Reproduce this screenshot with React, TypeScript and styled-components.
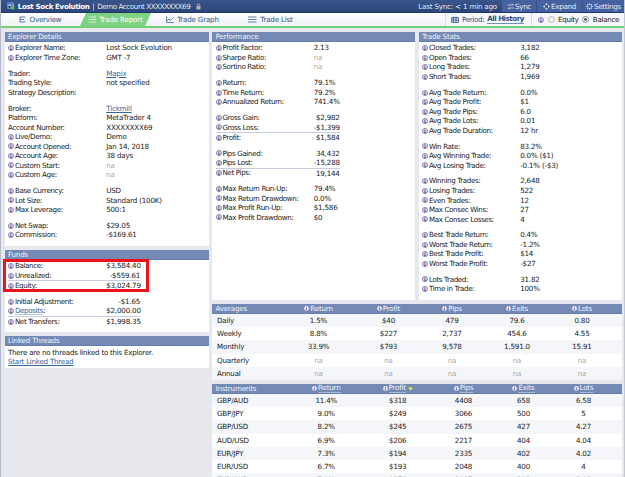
import type { ReactNode } from "react";
import styled, { createGlobalStyle } from "styled-components";

const GlobalStyle = createGlobalStyle`
  *,
  *::after {
    box-sizing: border-box;
  }

  body {
    margin: 0;
    overflow: hidden;
    font-family: "DejaVu Sans", Verdana, sans-serif;
    font-size: 7.15px;
    letter-spacing: -0.2px;
    color: #222;
    background: #e6e8ed;
  }
`;

const Page = styled.div`
  width: 625px;
  height: 477px;
  overflow: hidden;
  border-left: 1.5px solid #b3bac9;
  border-right: 1.5px solid #c3c8d2;
`;

const TitleBar = styled.header`
  display: flex;
  align-items: center;
  height: 13px;
  padding-left: 6px;
  color: #e4eaf6;
  background: linear-gradient(#39568c, #2b4578);
  border-bottom: 1px solid #20386b;
  white-space: nowrap;
`;

const Title = styled.div`
  display: flex;
  align-items: center;
  flex: 1;
  gap: 2.8px;
  letter-spacing: -0.42px;

  b {
    color: #fff;
    letter-spacing: -0.38px;
  }
`;

const LastSync = styled.span`
  margin-right: 4px;
`;

const TopButton = styled.div<{ $width: number }>`
  display: flex;
  align-items: center;
  justify-content: center;
  gap: 1px;
  width: ${(p) => p.$width}px;
  height: 12px;
  letter-spacing: -0.3px;
  background: #4661a0;
  border-left: 1px solid #36518b;
`;

const TabBar = styled.nav`
  display: flex;
  height: 15px;
  color: #2b5288;
  background: linear-gradient(#fff, #eff1f7);
  border-bottom: 2px solid #74d074;
  white-space: nowrap;
`;

const Tab = styled.div<{ $width: number; $active?: boolean }>`
  display: flex;
  align-items: center;
  justify-content: center;
  gap: 3px;
  width: ${(p) => p.$width}px;
  color: ${(p) => (p.$active ? "#fff" : "inherit")};
  background: ${(p) => (p.$active ? "#7fd284" : "none")};
  clip-path: ${(p) =>
    p.$active ? "polygon(6px 0, 100% 0, calc(100% - 6px) 100%, 0 100%)" : "none"};
`;

const Period = styled.div`
  display: flex;
  align-items: center;
  gap: 3px;
  width: 87px;
  margin-left: auto;
  padding-left: 5px;
  letter-spacing: -0.35px;
  background: #f5f7fc;
  border-left: 1px solid #d8dce6;
  border-right: 1px solid #d8dce6;

  b {
    line-height: 8px;
    letter-spacing: -0.5px;
    border-bottom: 1px solid #6e91c2;
  }
`;

const Options = styled.div`
  display: flex;
  align-items: center;
  width: 92px;
  padding-left: 6px;
  gap: 3.5px;
  letter-spacing: -0.3px;
  color: #222;
  background: #f5f7fc;
`;

const Radio = styled.i<{ $on?: boolean }>`
  width: 7px;
  height: 7px;
  border: 1px solid ${(p) => (p.$on ? "#8c8c8c" : "#b5b5b5")};
  border-radius: 50%;
  background: ${(p) => (p.$on ? "radial-gradient(#555 30%, #fff 48%)" : "#f2f2f2")};
`;

const Content = styled.main`
  display: grid;
  grid-template-columns: 204px 409.5px;
  gap: 3.5px;
  padding: 4px 0 0 3.5px;
`;

const Column = styled.div`
  display: flex;
  flex-direction: column;
  gap: 4px;
`;

const TopPanels = styled.div`
  display: grid;
  grid-template-columns: 203px 203px;
  gap: 3.5px;
`;

const Panel = styled.section<{ $height: number }>`
  height: ${(p) => p.$height}px;
  background: #fff;
`;

const PanelHeader = styled.h3`
  height: 10px;
  margin: 0;
  padding-left: 3.5px;
  font-size: inherit;
  font-weight: normal;
  line-height: 9.5px;
  color: #eef2fa;
  background: #748ab5;
  border-bottom: 1px solid #647dad;
`;

const Rows = styled.div`
  display: flex;
  flex-direction: column;
  gap: 6.3px;
  padding: 1.4px 3.5px 0;
`;

const Row = styled.div<{ $total?: boolean }>`
  display: flex;
  height: ${(p) => (p.$total ? 10.2 : 9.53)}px;
  line-height: 9.53px;
  white-space: nowrap;
  width: ${(p) => (p.$total ? "fit-content" : "auto")};
  border-top: ${(p) => (p.$total ? "1px solid #c6cfe1" : "none")};
`;

const Label = styled.span`
  display: flex;
  align-items: center;
  gap: 0.9px;
  width: 98.2px;
  letter-spacing: -0.36px;
`;

const Value = styled.span<{ $right?: number; $muted?: boolean }>`
  width: ${(p) => (p.$right ? `${p.$right}px` : "auto")};
  text-align: ${(p) => (p.$right ? "right" : "left")};
  color: ${(p) => (p.$muted ? "#aaa" : "inherit")};
`;

const Link = styled.a`
  color: #3668a0;
  text-decoration: underline;
  text-decoration-thickness: 1px;
  text-underline-offset: 1px;
`;

const SoftLink = styled(Link)`
  text-decoration-color: #b9c9de;
`;

const Highlighted = styled.div`
  position: relative;

  &::after {
    content: "";
    position: absolute;
    top: -2.5px;
    left: -5.5px;
    width: 146px;
    height: 33px;
    border: 3px solid #ec111a;
  }
`;

const Note = styled.div`
  padding: 1.7px 3.5px;
  line-height: 9.2px;
  letter-spacing: -0.26px;
`;

const Table = styled.section`
  background: #fff;
`;

const TableRow = styled.div<{ $columns: string; $head?: boolean }>`
  display: grid;
  grid-template-columns: ${(p) => p.$columns};
  height: ${(p) => (p.$head ? 10 : 13.2)}px;
  line-height: ${(p) => (p.$head ? 9.5 : 13)}px;
  color: ${(p) => (p.$head ? "#eef2fa" : "inherit")};
  background: ${(p) => (p.$head ? "#748ab5" : "#fff")};
  border-bottom: ${(p) => (p.$head ? "1px solid #647dad" : "none")};

  &:nth-child(even) {
    background: #f4f6fa;
  }
`;

const Name = styled.span<{ $head?: boolean }>`
  padding-left: ${(p) => (p.$head ? 3.5 : 5)}px;
`;

const Cell = styled.span<{ $muted?: boolean }>`
  text-align: center;
  color: ${(p) => (p.$muted ? "#aaa" : "inherit")};
`;

const HeadCell = styled.span<{ $sortable?: boolean }>`
  display: flex;
  align-items: center;
  justify-content: center;
  gap: 1px;

  u {
    text-decoration: none;
    line-height: 8.5px;
    border-bottom: ${(p) => (p.$sortable ? "1px solid #a9b9d8" : "none")};
  }
`;

const Info = ({ light }: { light?: boolean }) => (
  <svg width={light ? 5 : 6} height={light ? 5 : 6} viewBox="0 0 12 12">
    <circle
      cx="6"
      cy="6"
      r="5.2"
      fill={light ? "#f1ecf8" : "#d9d3ea"}
      stroke={light ? "#e4e2f2" : "#8379ab"}
      strokeWidth="1.6"
    />
    <path
      d="M6 2.6v1.6M4.5 5.4H6v3.8M4.3 9.2h3.6"
      stroke="#5d4b91"
      strokeWidth="1.6"
      fill="none"
    />
  </svg>
);

const Logo = () => (
  <svg width="8" height="8" viewBox="0 0 16 16">
    <path d="M1 1h13v13H1z" fill="#9eb4dc" />
    <path d="M1 1h13v4H1z" fill="#4a79d0" />
    <path d="M3 8h4v5H3z" fill="#26395e" />
    <path d="M8 6h3v4H8z" fill="#e34040" />
    <path d="M10 9h5v6h-5z" fill="#4fb755" />
  </svg>
);

const Lock = () => (
  <svg width="9" height="7" viewBox="-6 0 18 14">
    <path d="M2.5 7V4a2.5 2.5 0 0 1 5 0v3" fill="none" stroke="#aaa" strokeWidth="1.8" />
    <path d="M1 6h8v7H1z" fill="#b6b1a8" />
  </svg>
);

const icons = {
  overview: "M2 2h11M2 7h8M2 12h11M2 2v10",
  report: "M1 2h2M5 2h11M1 7h2M5 7h11M1 12h2M5 12h11",
  graph: "M1 1v12h15M2 10l4-4 3 3 6-6",
  list: "M0 2h17M0 7h17M0 12h17",
  calendar: "M1 3h14v10H1zM1 6h14M1 9.5h14M5 1v12M10 1v12",
  sync: "M1 4h12M10 1l3 3M14 10H2M5 13l-3-3",
  expand: "M7 1v3M7 10v3M4.5 3.5L7 1l2.5 2.5M4.5 10.5L7 13l2.5-2.5M3.5 4.5L1 7l2.5 2.5M10.5 4.5L13 7l-2.5 2.5M1 7h3M10 7h3",
  settings: "M7 3a4 4 0 1 0 .1 0zM7 0v3M7 11v3M0 7h3M11 7h3M2 2l2 2M10 10l2 2M12 2l-2 2M4 10l-2 2",
};

const Icon = ({ name, width = 8 }: { name: keyof typeof icons; width?: number }) => (
  <svg width={width} height="7" viewBox={`0 0 ${width * 2} 14`}>
    <path d={icons[name]} fill="none" stroke="currentColor" strokeWidth="1.8" opacity="0.8" />
  </svg>
);

interface Item {
  label: ReactNode;
  value?: ReactNode;
  plain?: boolean;
  right?: number;
  total?: boolean;
}

const item = (label: ReactNode, value?: ReactNode): Item => ({ label, value });
const plain = (label: string, value?: ReactNode): Item => ({ label, value, plain: true });

const explorer: Item[][] = [
  [item("Explorer Name:", "Lost Sock Evolution"), item("Explorer Time Zone:", "GMT -7")],
  [
    plain("Trader:", <Link>Mapix</Link>),
    plain("Trading Style:", "not specified"),
    plain("Strategy Description:"),
  ],
  [
    plain("Broker:", <Link>Tickmill</Link>),
    plain("Platform:", "MetaTrader 4"),
    plain("Account Number:", "XXXXXXXX69"),
    item("Live/Demo:", "Demo"),
    item("Account Opened:", "Jan 14, 2018"),
    item("Account Age:", "38 days"),
    item("Custom Start:", "na"),
    item("Custom Age:", "na"),
  ],
  [
    item("Base Currency:", "USD"),
    item("Lot Size:", "Standard (100K)"),
    item("Max Leverage:", "500:1"),
  ],
  [item("Net Swap:", "$29.05"), item("Commission:", "-$169.61")],
];

const balance: Item[] = [
  { label: "Balance:", value: "$3,584.40", right: 34 },
  { label: "Unrealized:", value: "-$559.61", right: 34 },
  { label: "Equity:", value: "$3,024.79", right: 34, total: true },
];

const transfers: Item[] = [
  { label: "Initial Adjustment:", value: "-$1.65", right: 34 },
  { label: <span><SoftLink>Deposits</SoftLink>:</span>, value: "$2,000.00", right: 34 },
  { label: "Net Transfers:", value: "$1,998.35", right: 34, total: true },
];

const performance: Item[][] = [
  [item("Profit Factor:", "2.13"), item("Sharpe Ratio:", "na"), item("Sortino Ratio:", "na")],
  [
    item("Return:", "79.1%"),
    item("Time Return:", "79.2%"),
    item("Annualized Return:", "741.4%"),
  ],
  [
    { label: "Gross Gain:", value: "$2,982", right: 26 },
    { label: "Gross Loss:", value: "-$1,399", right: 26 },
    { label: "Profit:", value: "$1,584", right: 26, total: true },
  ],
  [
    { label: "Pips Gained:", value: "34,432", right: 26 },
    { label: "Pips Lost:", value: "-15,288", right: 26 },
    { label: "Net Pips:", value: "19,144", right: 26, total: true },
  ],
  [
    item("Max Return Run-Up:", "79.4%"),
    item("Max Return Drawdown:", "0.0%"),
    item("Max Profit Run-Up:", "$1,586"),
    item("Max Profit Drawdown:", "$0"),
  ],
];

const stats: Item[][] = [
  [
    item("Closed Trades:", "3,182"),
    item("Open Trades:", "66"),
    item("Long Trades:", "1,279"),
    item("Short Trades:", "1,969"),
  ],
  [
    item("Avg Trade Return:", "0.0%"),
    item("Avg Trade Profit:", "$1"),
    item("Avg Trade Pips:", "6.0"),
    item("Avg Trade Lots:", "0.01"),
    item("Avg Trade Duration:", "12 hr"),
  ],
  [
    item("Win Rate:", "83.2%"),
    item("Avg Winning Trade:", "0.0% ($1)"),
    item("Avg Losing Trade:", "-0.1% (-$3)"),
  ],
  [
    item("Winning Trades:", "2,648"),
    item("Losing Trades:", "522"),
    item("Even Trades:", "12"),
    item("Max Consec Wins:", "27"),
    item("Max Consec Losses:", "4"),
  ],
  [
    item("Best Trade Return:", "0.4%"),
    item("Worst Trade Return:", "-1.2%"),
    item("Best Trade Profit:", "$14"),
    item("Worst Trade Profit:", "-$27"),
  ],
  [item("Lots Traded:", "31.82"), item("Time in Trade:", "100%")],
];

const columns = ["Return", "Profit", "Pips", "Exits", "Lots"];

const averages = [
  ["Daily", "1.5%", "$40", "479", "79.6", "0.80"],
  ["Weekly", "8.8%", "$227", "2,737", "454.6", "4.55"],
  ["Monthly", "33.9%", "$793", "9,578", "1,591.0", "15.91"],
  ["Quarterly", "na", "na", "na", "na", "na"],
  ["Annual", "na", "na", "na", "na", "na"],
];

const instruments = [
  ["GBP/AUD", "11.4%", "$318", "4408", "658", "6.58"],
  ["GBP/JPY", "9.0%", "$249", "3066", "500", "5"],
  ["GBP/USD", "8.2%", "$245", "2675", "427", "4.27"],
  ["AUD/USD", "6.9%", "$206", "2217", "404", "4.04"],
  ["EUR/JPY", "7.3%", "$194", "2335", "402", "4.02"],
  ["EUR/USD", "6.7%", "$193", "2048", "400", "4"],
  ["EUR/AUD", "7.0%", "$179", "1987", "391", "3.91"],
];

const Group = ({ items }: { items: Item[] }) => (
  <div>
    {items.map((entry, i) => (
      <Row key={i} $total={entry.total}>
        <Label>
          {entry.plain ? null : <Info />}
          {entry.label}
        </Label>
        <Value $right={entry.right} $muted={entry.value === "na"}>
          {entry.value}
        </Value>
      </Row>
    ))}
  </div>
);

interface DataTableProps {
  title: string;
  rows: string[][];
  widths: string;
  sortable?: boolean;
}

const DataTable = ({ title, rows, widths, sortable }: DataTableProps) => (
  <Table>
    <TableRow $columns={widths} $head>
      <Name $head>{title}</Name>
      {columns.map((column) => (
        <HeadCell key={column} $sortable={sortable}>
          <Info light />
          <u>{column}</u>
          {sortable && column === "Profit" ? (
            <svg width="6" height="5" viewBox="0 0 6 5">
              <path d="M1 1.5h5L3.5 4.5z" fill="#f4ec4c" />
            </svg>
          ) : null}
        </HeadCell>
      ))}
    </TableRow>
    {rows.map(([name, ...cells]) => (
      <TableRow key={name} $columns={widths}>
        <Name>{name}</Name>
        {cells.map((cell, i) => (
          <Cell key={i} $muted={cell === "na"}>
            {cell}
          </Cell>
        ))}
      </TableRow>
    ))}
  </Table>
);

const App = () => (
  <Page>
    <GlobalStyle />
    <TitleBar>
      <Title>
        <Logo />
        <b>Lost Sock Evolution</b>
        <span>|</span>
        <span>Demo Account XXXXXXXX69</span>
        <Lock />
      </Title>
      <LastSync>Last Sync: &lt; 1 min ago</LastSync>
      <TopButton $width={35}>
        <Icon name="sync" width={7} />
        Sync
      </TopButton>
      <TopButton $width={46}>
        <Icon name="expand" width={7} />
        Expand
      </TopButton>
      <TopButton $width={42}>
        <Icon name="settings" width={7} />
        Settings
      </TopButton>
    </TitleBar>
    <TabBar>
      <Tab $width={79}>
        <Icon name="overview" width={7} />
        Overview
      </Tab>
      <Tab $width={71} $active>
        <Icon name="report" />
        Trade Report
      </Tab>
      <Tab $width={83}>
        <Icon name="graph" />
        Trade Graph
      </Tab>
      <Tab $width={73}>
        <Icon name="list" width={9} />
        Trade List
      </Tab>
      <Period>
        <Icon name="calendar" />
        <span>Period:</span>
        <b>All History</b>
      </Period>
      <Options>
        <Info />
        <Radio />
        Equity
        <Radio $on />
        Balance
      </Options>
    </TabBar>
    <Content>
      <Column>
        <Panel $height={214}>
          <PanelHeader>Explorer Details</PanelHeader>
          <Rows>
            {explorer.map((items, i) => (
              <Group key={i} items={items} />
            ))}
          </Rows>
        </Panel>
        <Panel $height={82}>
          <PanelHeader>Funds</PanelHeader>
          <Rows>
            <Highlighted>
              <Group items={balance} />
            </Highlighted>
            <Group items={transfers} />
          </Rows>
        </Panel>
        <Panel $height={32}>
          <PanelHeader>Linked Threads</PanelHeader>
          <Note>
            There are no threads linked to this Explorer.
            <br />
            <Link>Start Linked Thread</Link>
          </Note>
        </Panel>
      </Column>
      <Column>
        <TopPanels>
          <Panel $height={268}>
            <PanelHeader>Performance</PanelHeader>
            <Rows>
              {performance.map((items, i) => (
                <Group key={i} items={items} />
              ))}
            </Rows>
          </Panel>
          <Panel $height={268}>
            <PanelHeader>Trade Stats</PanelHeader>
            <Rows>
              {stats.map((items, i) => (
                <Group key={i} items={items} />
              ))}
            </Rows>
          </Panel>
        </TopPanels>
        <DataTable
          title="Averages"
          rows={averages}
          widths="75px 63px 77px 50px 80px 50px 1fr"
        />
        <DataTable
          title="Instruments"
          rows={instruments}
          widths="78.5px 71.5px 71.5px 60px 60px 60px 1fr"
          sortable
        />
      </Column>
    </Content>
  </Page>
);

export default App;
